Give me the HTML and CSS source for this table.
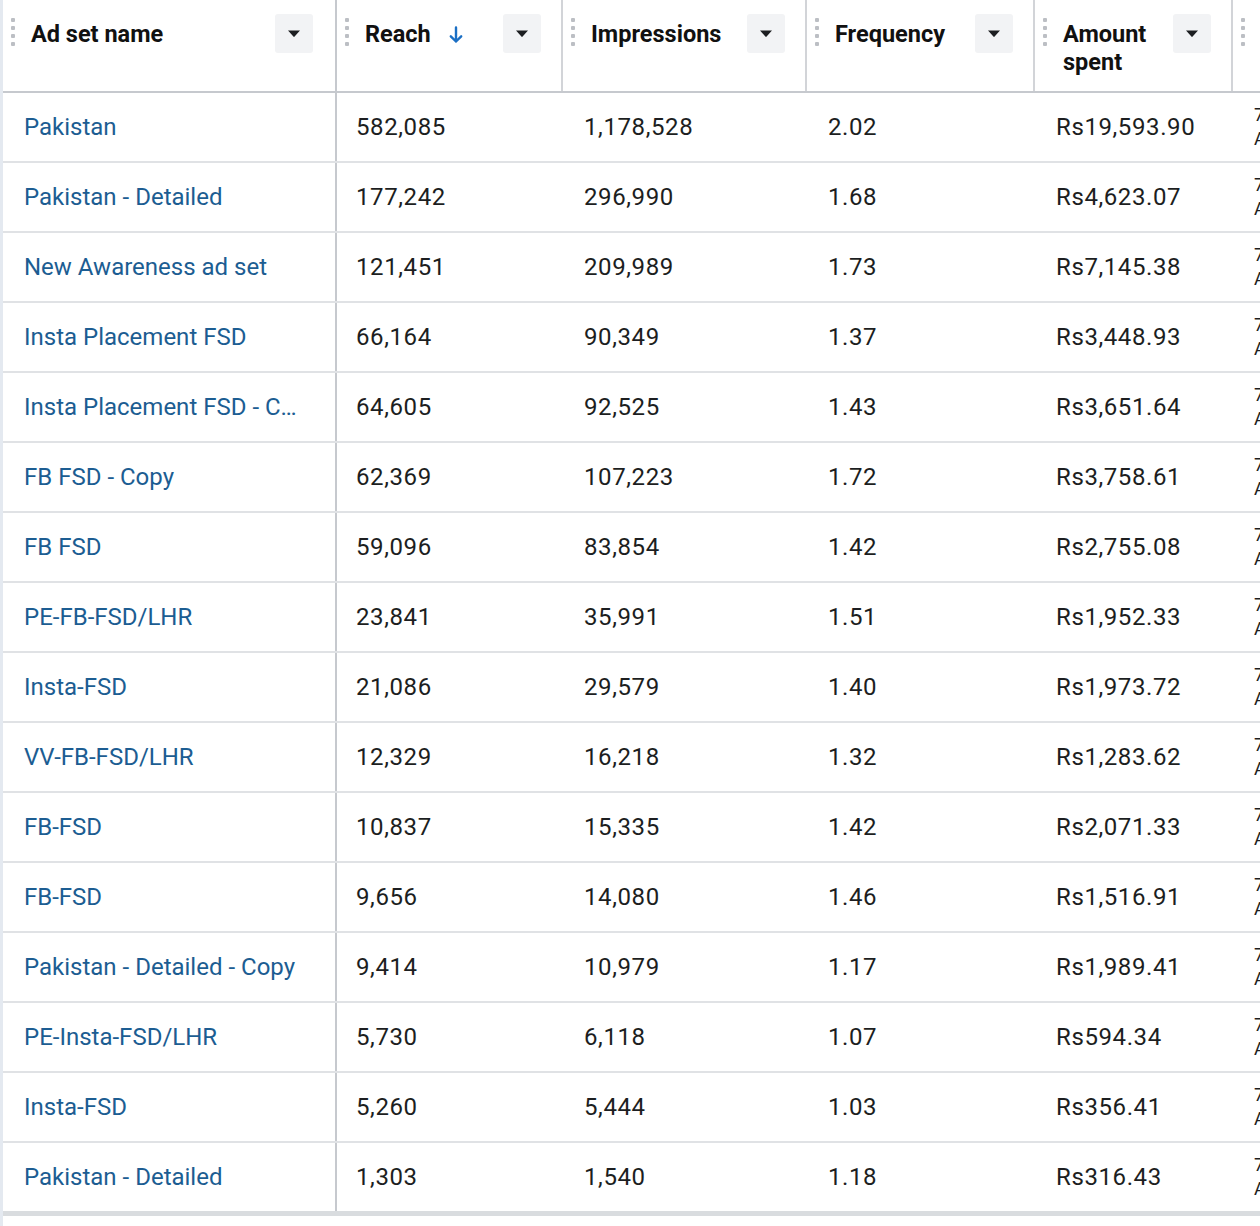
FILE: index.html
```html
<!DOCTYPE html>
<html lang="en">
<head>
<meta charset="utf-8">
<title>Ad sets</title>
<link rel="stylesheet" href="styles.css">
</head>
<body>
<div class="page">
  <div class="table">
    <div class="row head">
      <div class="hcell c1">
        <span class="grip"><i></i><i></i><i></i><i></i></span>
        <span class="title">Ad set name</span>
        <span class="btn"><svg width="14" height="9" viewBox="0 0 14 9"><path d="M1 1.5h12L7.6 7.6a.8.8 0 0 1-1.2 0z" fill="#1c1e21"/></svg></span>
      </div>
      <div class="hcell">
        <span class="grip"><i></i><i></i><i></i><i></i></span>
        <span class="title">Reach <svg class="sort" width="14" height="18" viewBox="0 0 14 18"><path d="M7 1.5v14M1.8 10.3 7 15.5l5.2-5.2" fill="none" stroke="#1b6fc4" stroke-width="2.4" stroke-linecap="round" stroke-linejoin="round"/></svg></span>
        <span class="btn"><svg width="14" height="9" viewBox="0 0 14 9"><path d="M1 1.5h12L7.6 7.6a.8.8 0 0 1-1.2 0z" fill="#1c1e21"/></svg></span>
      </div>
      <div class="hcell">
        <span class="grip"><i></i><i></i><i></i><i></i></span>
        <span class="title">Impressions</span>
        <span class="btn"><svg width="14" height="9" viewBox="0 0 14 9"><path d="M1 1.5h12L7.6 7.6a.8.8 0 0 1-1.2 0z" fill="#1c1e21"/></svg></span>
      </div>
      <div class="hcell">
        <span class="grip"><i></i><i></i><i></i><i></i></span>
        <span class="title">Frequency</span>
        <span class="btn"><svg width="14" height="9" viewBox="0 0 14 9"><path d="M1 1.5h12L7.6 7.6a.8.8 0 0 1-1.2 0z" fill="#1c1e21"/></svg></span>
      </div>
      <div class="hcell">
        <span class="grip"><i></i><i></i><i></i><i></i></span>
        <span class="title narrow">Amount spent</span>
        <span class="btn"><svg width="14" height="9" viewBox="0 0 14 9"><path d="M1 1.5h12L7.6 7.6a.8.8 0 0 1-1.2 0z" fill="#1c1e21"/></svg></span>
      </div>
      <div class="hcell last">
        <span class="grip"><i></i><i></i><i></i><i></i></span>
        <span class="title">Ends</span>
      </div>
    </div>

    <div class="row"><div class="cell c1"><a>Pakistan</a></div><div class="cell num">582,085</div><div class="cell num">1,178,528</div><div class="cell num">2.02</div><div class="cell num">Rs19,593.90</div><div class="cell extra"><span>7 Mar 2023</span><span>Active</span></div></div>
    <div class="row"><div class="cell c1"><a>Pakistan - Detailed</a></div><div class="cell num">177,242</div><div class="cell num">296,990</div><div class="cell num">1.68</div><div class="cell num">Rs4,623.07</div><div class="cell extra"><span>7 Mar 2023</span><span>Active</span></div></div>
    <div class="row"><div class="cell c1"><a>New Awareness ad set</a></div><div class="cell num">121,451</div><div class="cell num">209,989</div><div class="cell num">1.73</div><div class="cell num">Rs7,145.38</div><div class="cell extra"><span>7 Mar 2023</span><span>Active</span></div></div>
    <div class="row"><div class="cell c1"><a>Insta Placement FSD</a></div><div class="cell num">66,164</div><div class="cell num">90,349</div><div class="cell num">1.37</div><div class="cell num">Rs3,448.93</div><div class="cell extra"><span>7 Mar 2023</span><span>Active</span></div></div>
    <div class="row"><div class="cell c1"><a class="clip">Insta Placement FSD - Copy</a></div><div class="cell num">64,605</div><div class="cell num">92,525</div><div class="cell num">1.43</div><div class="cell num">Rs3,651.64</div><div class="cell extra"><span>7 Mar 2023</span><span>Active</span></div></div>
    <div class="row"><div class="cell c1"><a>FB FSD - Copy</a></div><div class="cell num">62,369</div><div class="cell num">107,223</div><div class="cell num">1.72</div><div class="cell num">Rs3,758.61</div><div class="cell extra"><span>7 Mar 2023</span><span>Active</span></div></div>
    <div class="row"><div class="cell c1"><a>FB FSD</a></div><div class="cell num">59,096</div><div class="cell num">83,854</div><div class="cell num">1.42</div><div class="cell num">Rs2,755.08</div><div class="cell extra"><span>7 Mar 2023</span><span>Active</span></div></div>
    <div class="row"><div class="cell c1"><a>PE-FB-FSD/LHR</a></div><div class="cell num">23,841</div><div class="cell num">35,991</div><div class="cell num">1.51</div><div class="cell num">Rs1,952.33</div><div class="cell extra"><span>7 Mar 2023</span><span>Active</span></div></div>
    <div class="row"><div class="cell c1"><a>Insta-FSD</a></div><div class="cell num">21,086</div><div class="cell num">29,579</div><div class="cell num">1.40</div><div class="cell num">Rs1,973.72</div><div class="cell extra"><span>7 Mar 2023</span><span>Active</span></div></div>
    <div class="row"><div class="cell c1"><a>VV-FB-FSD/LHR</a></div><div class="cell num">12,329</div><div class="cell num">16,218</div><div class="cell num">1.32</div><div class="cell num">Rs1,283.62</div><div class="cell extra"><span>7 Mar 2023</span><span>Active</span></div></div>
    <div class="row"><div class="cell c1"><a>FB-FSD</a></div><div class="cell num">10,837</div><div class="cell num">15,335</div><div class="cell num">1.42</div><div class="cell num">Rs2,071.33</div><div class="cell extra"><span>7 Mar 2023</span><span>Active</span></div></div>
    <div class="row"><div class="cell c1"><a>FB-FSD</a></div><div class="cell num">9,656</div><div class="cell num">14,080</div><div class="cell num">1.46</div><div class="cell num">Rs1,516.91</div><div class="cell extra"><span>7 Mar 2023</span><span>Active</span></div></div>
    <div class="row"><div class="cell c1"><a>Pakistan - Detailed - Copy</a></div><div class="cell num">9,414</div><div class="cell num">10,979</div><div class="cell num">1.17</div><div class="cell num">Rs1,989.41</div><div class="cell extra"><span>7 Mar 2023</span><span>Active</span></div></div>
    <div class="row"><div class="cell c1"><a>PE-Insta-FSD/LHR</a></div><div class="cell num">5,730</div><div class="cell num">6,118</div><div class="cell num">1.07</div><div class="cell num">Rs594.34</div><div class="cell extra"><span>7 Mar 2023</span><span>Active</span></div></div>
    <div class="row"><div class="cell c1"><a>Insta-FSD</a></div><div class="cell num">5,260</div><div class="cell num">5,444</div><div class="cell num">1.03</div><div class="cell num">Rs356.41</div><div class="cell extra"><span>7 Mar 2023</span><span>Active</span></div></div>
    <div class="row lastrow"><div class="cell c1"><a>Pakistan - Detailed</a></div><div class="cell num">1,303</div><div class="cell num">1,540</div><div class="cell num">1.18</div><div class="cell num">Rs316.43</div><div class="cell extra"><span>7 Mar 2023</span><span>Active</span></div></div>
  </div>
</div>
</body>
</html>
```

FILE: styles.css
```css
html, body {
  margin: 0;
  padding: 0;
  overflow: hidden;
  background: #ffffff;
}

.page {
  min-height: 100vh;
  border-left: 3px solid #e4e9f0;
  font-family: Roboto, "Liberation Sans", sans-serif;
  color: #1c1e21;
}

.table {
  width: 1400px;
}

.row {
  display: grid;
  grid-template-columns: 334px 226px 244px 228px 198px 170px;
  height: 70px;
  box-sizing: border-box;
  border-bottom: 2px solid #e0e2e5;
}

.row.head {
  height: 93px;
  border-bottom: 2px solid #c6c9ce;
}

.row.lastrow {
  height: 73px;
  border-bottom: 5px solid #d9dcdf;
}

.hcell {
  display: flex;
  align-items: flex-start;
  padding: 14px 20px 0 8px;
  border-right: 2px solid #d2d4d8;
  min-width: 0;
}

.hcell.c1 {
  border-right-color: #c6c9ce;
  padding-right: 22px;
}

.hcell.last {
  border-right: none;
}

.grip {
  display: flex;
  flex-direction: column;
  gap: 4px;
  padding-top: 4px;
  flex: none;
}

.grip i {
  display: block;
  width: 4px;
  height: 4px;
  border-radius: 1px;
  background: #bcbfc4;
}

.title {
  flex: 1;
  min-width: 0;
  margin-left: 16px;
  padding-top: 6px;
  font-size: 23.5px;
  font-weight: 700;
  line-height: 28px;
  color: #111;
  display: flex;
  align-items: center;
  gap: 18px;
}

.title.narrow {
  display: block;
}

.sort {
  flex: none;
  margin-top: 1px;
}

.btn {
  flex: none;
  width: 38px;
  height: 39px;
  border-radius: 3px;
  background: #f2f3f5;
  display: flex;
  align-items: center;
  justify-content: center;
  margin-left: 8px;
}

.cell {
  display: flex;
  align-items: center;
  padding-left: 21px;
  font-size: 24px;
  color: #1c1e21;
  white-space: nowrap;
  overflow: hidden;
  min-width: 0;
}

.cell.num {
  letter-spacing: 0.6px;
}

.cell.c1 {
  border-right: 2px solid #c6c9ce;
}

.cell.c1 + .cell {
  padding-left: 19px;
}

.cell a {
  color: #1c5d92;
  text-decoration: none;
}

.cell a.clip {
  display: block;
  max-width: 280px;
  overflow: hidden;
  text-overflow: ellipsis;
}

.cell.extra {
  flex-direction: column;
  align-items: flex-start;
  justify-content: center;
  font-size: 18px;
  line-height: 24px;
}
```
